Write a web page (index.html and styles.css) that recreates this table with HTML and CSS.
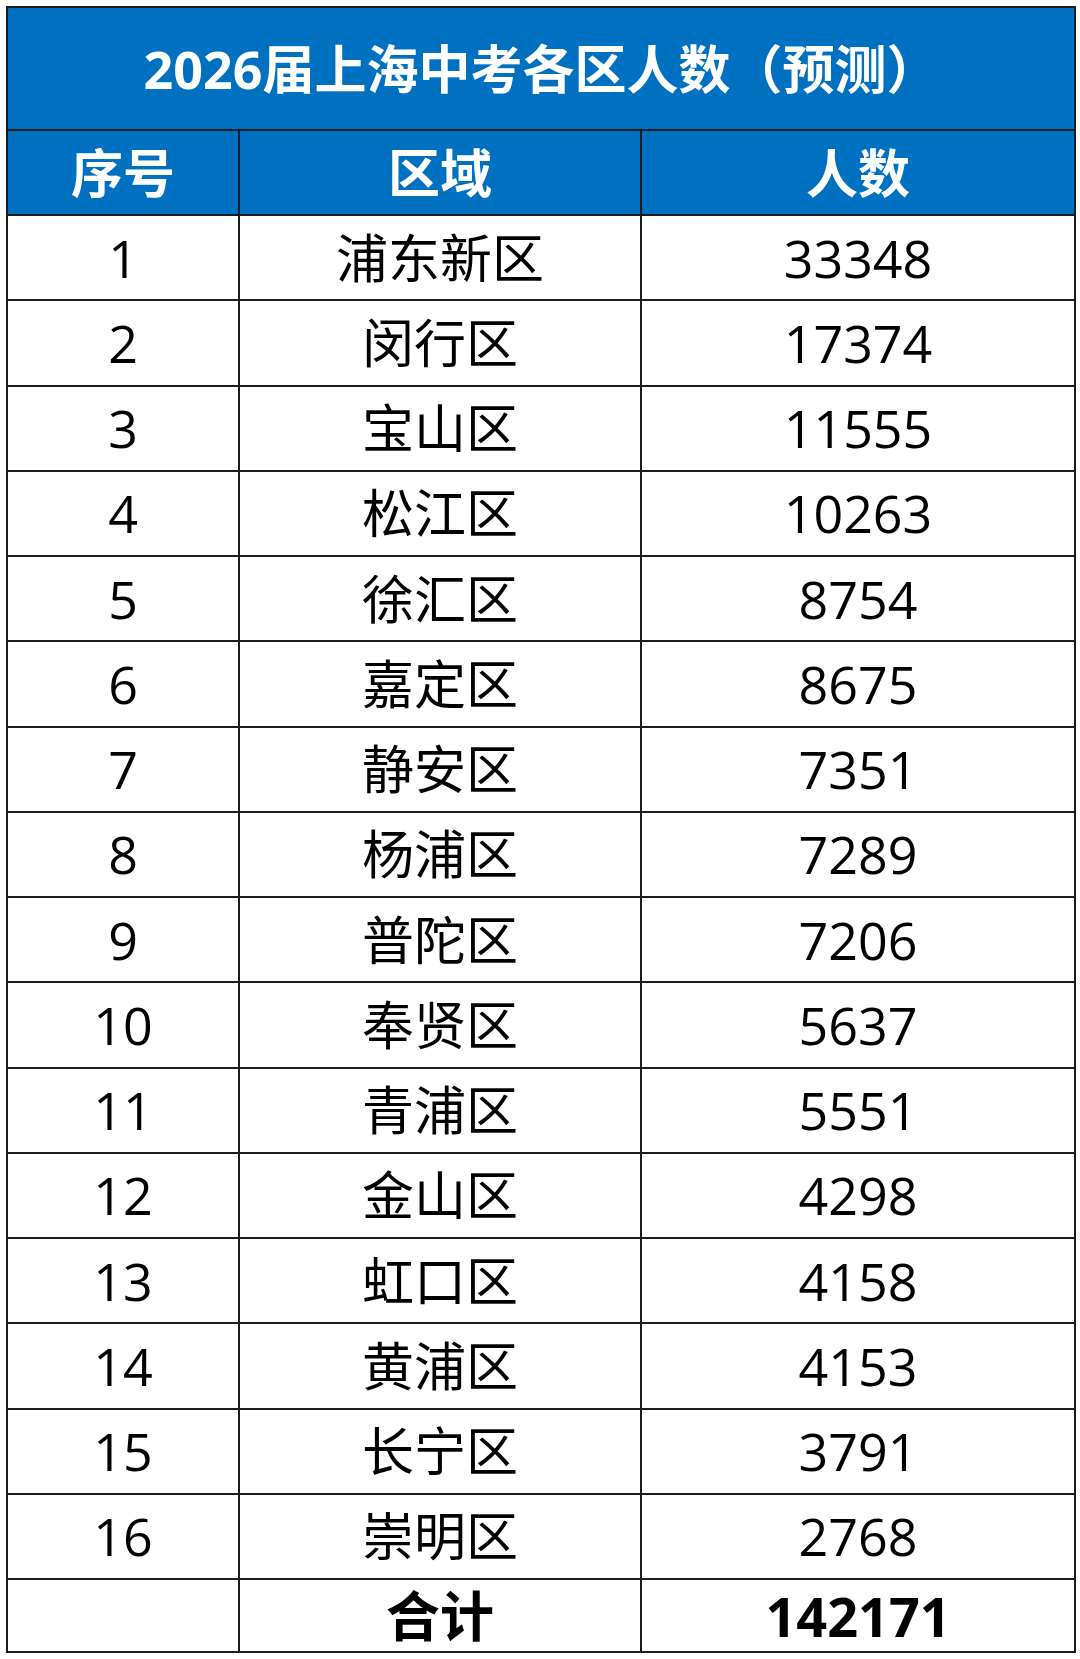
FILE: index.html
```html
<!DOCTYPE html>
<html lang="zh-CN">
<head>
<meta charset="utf-8">
<title>2026届上海中考各区人数（预测）</title>
<link rel="stylesheet" href="styles.css">
</head>
<body>
<div class="page">
<table class="stats">
  <colgroup>
    <col class="c-no">
    <col class="c-area">
    <col class="c-num">
  </colgroup>
  <thead>
    <tr class="title-row"><th colspan="3">2026届上海中考各区人数（预测）</th></tr>
    <tr class="head-row"><th>序号</th><th>区域</th><th>人数</th></tr>
  </thead>
  <tbody>
    <tr><td>1</td><td>浦东新区</td><td>33348</td></tr>
    <tr><td>2</td><td>闵行区</td><td>17374</td></tr>
    <tr><td>3</td><td>宝山区</td><td>11555</td></tr>
    <tr><td>4</td><td>松江区</td><td>10263</td></tr>
    <tr><td>5</td><td>徐汇区</td><td>8754</td></tr>
    <tr><td>6</td><td>嘉定区</td><td>8675</td></tr>
    <tr><td>7</td><td>静安区</td><td>7351</td></tr>
    <tr><td>8</td><td>杨浦区</td><td>7289</td></tr>
    <tr><td>9</td><td>普陀区</td><td>7206</td></tr>
    <tr><td>10</td><td>奉贤区</td><td>5637</td></tr>
    <tr><td>11</td><td>青浦区</td><td>5551</td></tr>
    <tr><td>12</td><td>金山区</td><td>4298</td></tr>
    <tr><td>13</td><td>虹口区</td><td>4158</td></tr>
    <tr><td>14</td><td>黄浦区</td><td>4153</td></tr>
    <tr><td>15</td><td>长宁区</td><td>3791</td></tr>
    <tr><td>16</td><td>崇明区</td><td>2768</td></tr>
  </tbody>
  <tfoot>
    <tr class="total-row"><td></td><td>合计</td><td>142171</td></tr>
  </tfoot>
</table>
</div>
</body>
</html>
```
FILE: styles.css
```css
html, body {
  margin: 0;
  padding: 0;
  background: #ffffff;
}

.page {
  padding: 6px 0 0 6px;
}

.stats {
  border-collapse: collapse;
  width: 1068px;
  table-layout: fixed;
  font-family: "Open Sans", "Noto Sans CJK SC", sans-serif;
  color: #000;
}

.c-no { width: 232px; }
.c-area { width: 402px; }
.c-num { width: 434px; }

.stats th,
.stats td {
  border: 2px solid #1c1c1c;
  text-align: center;
  vertical-align: middle;
  padding: 0;
  line-height: 1;
}

.title-row th {
  background: #0070c0;
  color: #fff;
  height: 121px;
  font-size: 52px;
  font-weight: 700;
}

.head-row th {
  background: #0070c0;
  color: #fff;
  height: 83px;
  font-size: 52px;
  font-weight: 700;
}

.stats tbody td {
  height: 83.25px;
  font-size: 52px;
  font-weight: 400;
}

.total-row td {
  height: 71px;
  font-size: 54px;
  font-weight: 700;
}
```
